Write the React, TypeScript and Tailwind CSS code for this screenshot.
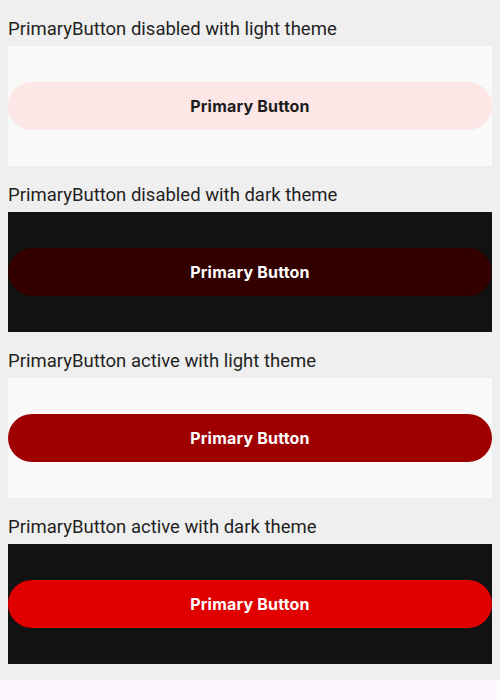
const SECTIONS = [
  { label: "PrimaryButton disabled with light theme", panel: "bg-[#f9f9f9]", button: "bg-[#fde6e6] text-[#1c1c1c]" },
  { label: "PrimaryButton disabled with dark theme", panel: "bg-[#111212]", button: "bg-[#330000] text-white" },
  { label: "PrimaryButton active with light theme", panel: "bg-[#f9f9f9]", button: "bg-[#9e0000] text-white" },
  { label: "PrimaryButton active with dark theme", panel: "bg-[#111212]", button: "bg-[#e00000] text-white" },
];

export default function App() {
  return (
    <div className="min-h-[700px] bg-[#fdf8fd]">
      <div className="bg-[#efefef] p-2">
        {SECTIONS.map((s) => (
          <div key={s.label} className="mb-2">
            <div
              className="pt-[10px] pb-[6px] text-[18.5px] leading-[22px] text-[#1f1f1f]"
              style={{ fontFamily: "Roboto, sans-serif" }}
            >
              {s.label}
            </div>
            <div className={`h-[120px] flex items-center ${s.panel}`}>
              <button
                className={`w-full h-12 rounded-full text-[16px] font-bold tracking-[0.2px] ${s.button}`}
                style={{ fontFamily: "Inter, sans-serif" }}
              >
                Primary Button
              </button>
            </div>
          </div>
        ))}
      </div>
    </div>
  );
}
